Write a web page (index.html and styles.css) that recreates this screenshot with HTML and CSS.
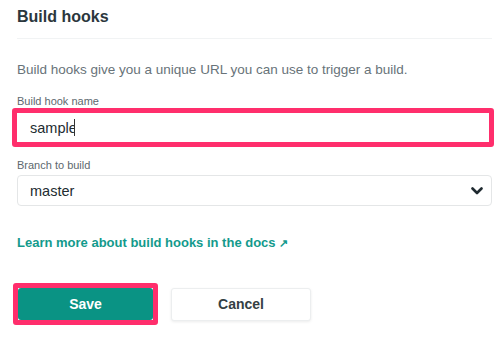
FILE: index.html
```html
<!DOCTYPE html>
<html lang="en">
<head>
    <meta charset="UTF-8">
    <meta name="viewport" content="width=device-width, initial-scale=1.0">
    <title>Build hooks</title>
    <link rel="stylesheet" href="styles.css">
</head>
<body>
    <h1 class="title">Build hooks</h1>
    <p class="intro">Build hooks give you a unique URL you can use to trigger a build.</p>
    <form class="hook-form">
        <div class="form-group">
            <label for="hook_name">Build hook name</label>
            <div class="highlight wide">
                <input type="text" id="hook_name" value="sample"><span class="caret"></span>
            </div>
        </div>
        <div class="form-group">
            <label for="branch">Branch to build</label>
            <div class="select-wrap">
                <select id="branch">
                    <option>master</option>
                </select>
                <svg class="chevron" width="12" height="8" viewBox="0 0 12 8">
                    <path d="M1.5 1.5 L6 6 L10.5 1.5" fill="none" stroke="#1f2a30" stroke-width="2.6" stroke-linecap="round" stroke-linejoin="round"/>
                </svg>
            </div>
        </div>
        <a class="docs-link" href="#">Learn more about build hooks in the docs <span class="arrow">&#8599;</span></a>
        <div class="actions">
            <div class="highlight">
                <button type="submit" class="btn btn-save">Save</button>
            </div>
            <button type="button" class="btn btn-cancel">Cancel</button>
        </div>
    </form>
</body>
</html>
```

FILE: styles.css
```css
body { margin: 0; padding: 0 8px 0 17px; font-family: "Liberation Sans", Arial, sans-serif; background: #fff; color: #2e3a40; }
.title { margin: 0; padding: 7px 0 12px; font-size: 16px; line-height: 19px; font-weight: bold; color: #2b373d; border-bottom: 1px solid #f1f3f4; }
.intro { margin: 22px 0 0; font-size: 13.5px; color: #687379; line-height: 18px; }
.hook-form { margin-top: 16px; }
.form-group { margin-bottom: 12px; }
label { display: block; font-size: 11px; line-height: 13px; color: #5d686e; margin-bottom: 3px; }
.highlight { border: 5px solid #ff2e6c; border-radius: 3px; display: inline-block; }
.highlight.wide { display: flex; align-items: center; width: 472px; height: 29px; margin: -3px 0 0 -5px; background: #fff; }
.highlight.wide input { border: none; outline: none; padding: 0 0 0 13px; font-size: 14.5px; font-family: inherit; color: #222c31; width: 44px; height: 29px; background: transparent; }
.caret { width: 1px; height: 17px; background: #333; }
.select-wrap { position: relative; width: 475px; }
select { width: 100%; height: 31px; appearance: none; -webkit-appearance: none; border: 1px solid #e4e6e7; border-radius: 4px; background: #fff; padding: 0 12px; font-size: 14.5px; font-family: inherit; color: #222c31; }
.chevron { position: absolute; right: 9px; top: 12px; }
.docs-link { display: block; margin-top: 29px; font-size: 13px; line-height: 16px; font-weight: bold; color: #139a8c; text-decoration: none; }
.arrow { font-size: 11px; }
.actions { display: flex; align-items: center; gap: 13px; margin: 32px 0 0 -4px; }
.btn { height: 32px; font-size: 14px; font-weight: bold; font-family: inherit; border-radius: 3px; cursor: pointer; }
.btn-save { display: block; width: 135px; border: none; background: #0a9384; color: #fff; }
.btn-cancel { width: 140px; height: 33px; background: #fff; color: #343f44; border: 1px solid #eceeef; box-shadow: 0 1px 3px rgba(0,0,0,0.08); }
```
